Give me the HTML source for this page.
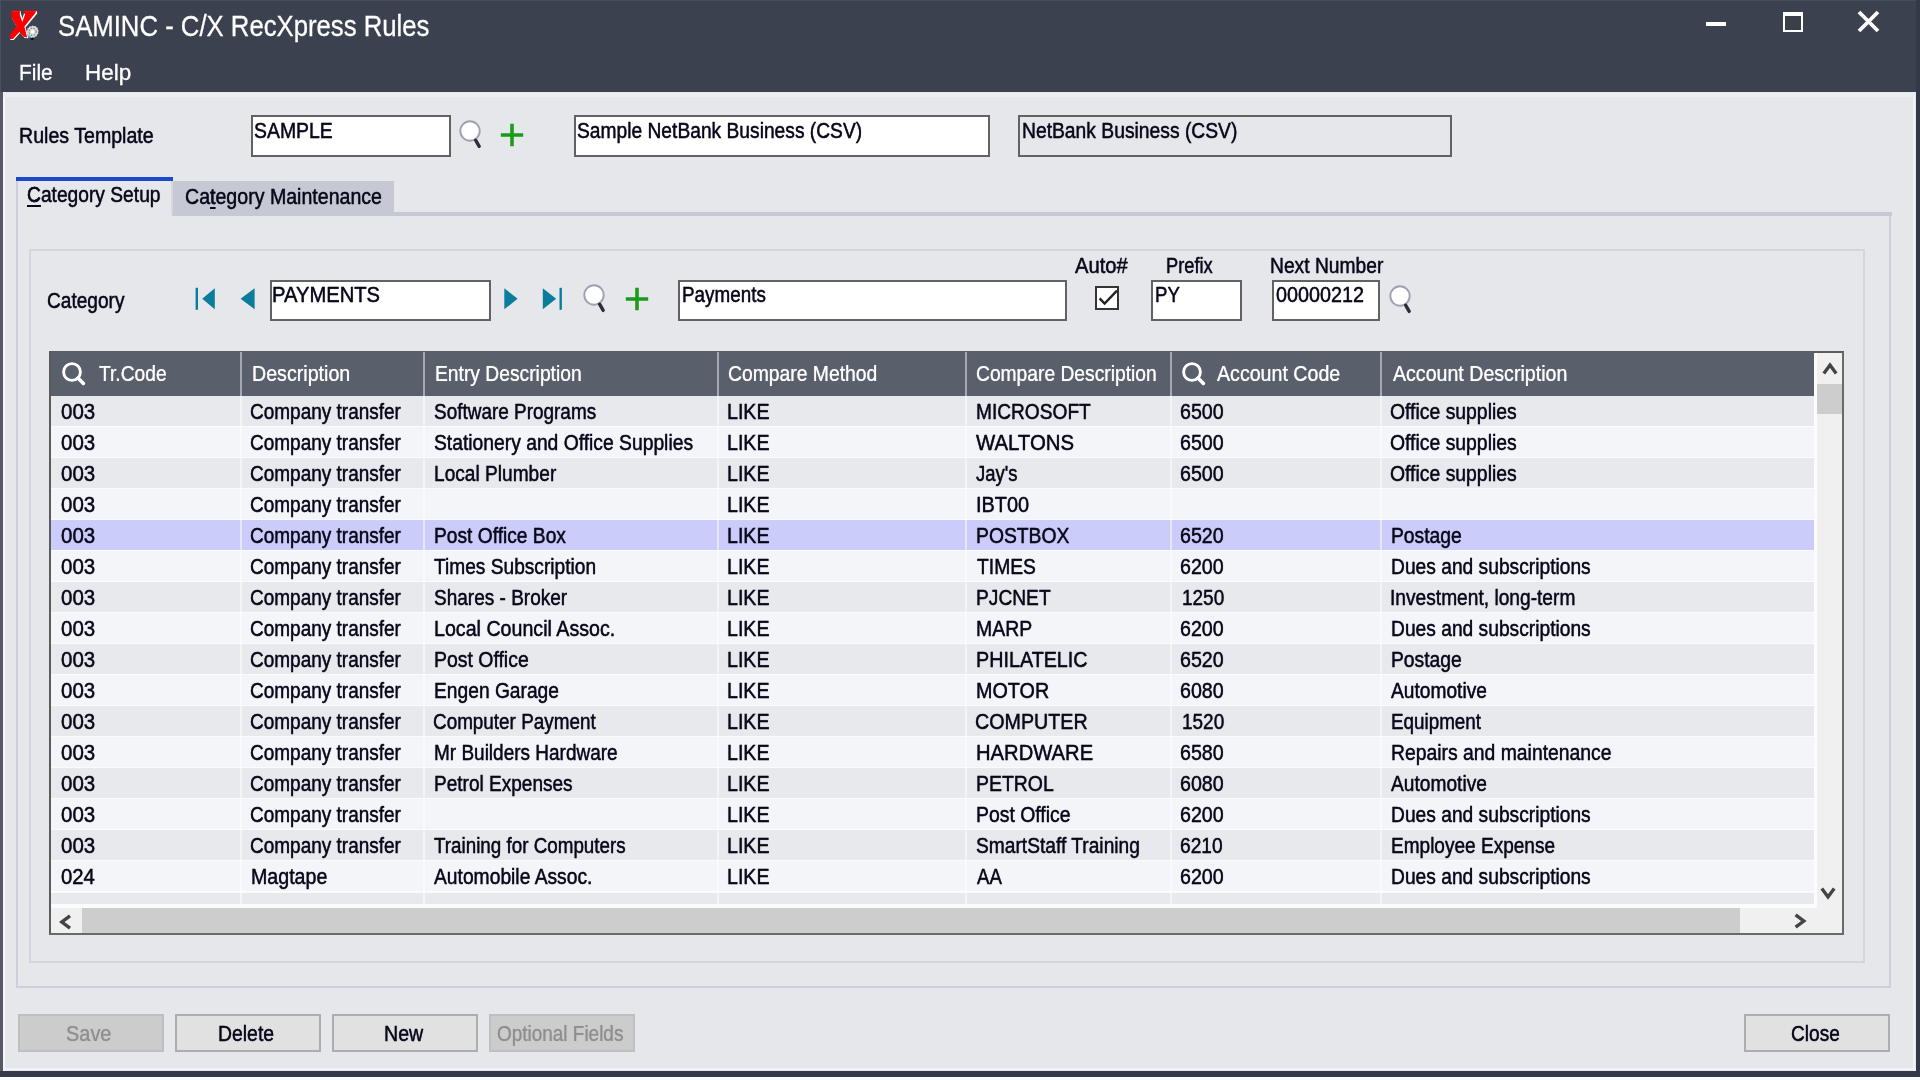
<!DOCTYPE html>
<html><head><meta charset="utf-8"><title>SAMINC - C/X RecXpress Rules</title>
<style>
html,body{margin:0;padding:0}
body{width:1920px;height:1080px;overflow:hidden;position:relative;background:#e6e7eb;font-family:"Liberation Sans",sans-serif;color:#000}
.a{position:absolute}
.t{position:absolute;white-space:nowrap;font-size:22.5px;line-height:26px;transform-origin:0 0;color:#08081a;-webkit-text-stroke:.35px #08081a;text-shadow:0 0 1px rgba(8,8,30,.55)}
.w{color:#fff;-webkit-text-stroke:.2px #fff;text-shadow:0 0 1px rgba(255,255,255,.5)}
.g{color:#8e8e8e;-webkit-text-stroke:.2px #8e8e8e;text-shadow:0 0 1px rgba(142,142,142,.5)}
u{text-decoration:underline;text-underline-offset:3px;text-decoration-thickness:2px}
.inp{position:absolute;background:#fff;border:2px solid #626262;box-sizing:border-box}
.btn{position:absolute;box-sizing:border-box;border:2px solid #adadad;background:#e1e1e1;height:38px;width:146px}
.btn.dis{background:#cccccc;border-color:#bfbfbf}
.row{position:absolute;left:51px;width:1763.3px;height:30.1px}
.ro{background:#e8e9ed}
.re{background:#f4f5f9}
.rs{background:#cbccfa}
.vs{position:absolute;width:2px;top:0;height:100%;background:rgba(255,255,255,.5)}
.hs{position:absolute;top:352px;height:43.6px;width:2px;background:#a6a9b3}
#wrap{position:absolute;left:0;top:0;width:1920px;height:1080px;overflow:hidden}
</style></head><body><div id="wrap">

<div class="a" style="left:0;top:0;width:1920px;height:92px;background:#3c4150"></div>
<div class="a" style="left:0;top:92px;width:2.7px;height:985px;background:#545964"></div>
<div class="a" style="left:0;top:0;width:1.2px;height:92px;background:#4b505d"></div>
<div class="a" style="left:0;top:0;width:1920px;height:1px;background:#474c5a"></div>
<div class="a" style="left:1916px;top:0;width:4px;height:1077px;background:#343949"></div>
<div class="a" style="left:0;top:1070.7px;width:1920px;height:6.4px;background:#343949"></div>
<div class="a" style="left:0;top:1077px;width:1920px;height:3px;background:#fbfbfb"></div>
<div class="a" style="left:2.7px;top:92px;width:2.8px;height:979px;background:#f5f6fa"></div>
<div class="a" style="left:1912.6px;top:92px;width:2.4px;height:979px;background:#f2f3f7"></div>
<div class="a" style="left:3px;top:1067.8px;width:1913px;height:2.4px;background:#f1f2f6"></div>
<div class="a" style="left:3px;top:92.6px;width:1913px;height:4px;background:#eceef2"></div>
<svg class="a" style="left:0;top:0" width="48" height="48" viewBox="0 0 48 48">
<path d="M12.6 11 L20.6 11 L21 14.5 L23 21 L25.2 14.5 L25 11.2 L37 11.2 L37.2 13.4 L25.6 27.4 L28.4 38.2 L24.6 38 L20.2 32.8 L13.8 40 L10.4 40 L10.4 36 L17 27 L12 18 Z" fill="#fff"/>
<path d="M11.5 12 L12.3 10 L13.3 11.4 L14.4 10 L15.5 11.4 L16.6 10 L17.7 11.4 L18.8 10 L19.8 10.6 L20 14.2 L22.3 20.8 L24.8 14.2 L23.6 11.4 L24.8 10 L26 11.4 L27.2 10 L28.4 11.4 L29.6 10 L30.8 11.4 L32 10 L33.2 11.4 L34.4 10 L36 10.4 L35.4 13 L24.4 26.6 L27.2 37.4 L23.8 36.8 L19.4 32 L13 39 L10 39 L10 34.6 L16.4 26 L11.5 17.2 Z" fill="#fb0000"/>
<path d="M20.3 13.4 L20.6 15 L22.3 20 L24.2 15 L24.5 13.6" stroke="#eefafa" stroke-width="1.3" fill="none"/>
<path d="M32.5 25.6 L34 26.2 L35.6 25.9 L36.3 27.3 L37.8 27.9 L37.7 29.5 L38.8 30.7 L38 32.1 L38.4 33.7 L37.1 34.6 L36.8 36.2 L35.2 36.4 L34.2 37.7 L32.7 37.2 L31.2 37.9 L30.1 36.7 L28.5 36.6 L28.1 35 L26.8 34.1 L27.2 32.5 L26.4 31.1 L27.5 29.9 L27.4 28.3 L28.9 27.7 L29.6 26.2 L31.2 26.5 Z" fill="#dcdcdc"/>
<circle cx="32.6" cy="31.8" r="3.6" fill="none" stroke="#8e8e8e" stroke-width="1.3" stroke-dasharray="1.6 1.3"/>
<circle cx="32.6" cy="31.8" r="1.7" fill="#fff"/>
<circle cx="29.3" cy="36.6" r="1.3" fill="#35c0c4"/>
<ellipse cx="32.2" cy="39" rx="1.6" ry="1" fill="#050505"/>
</svg>
<div class="a" style="left:57.5px;top:9px;font-size:30px;line-height:34px;white-space:nowrap;transform-origin:0 0;transform:scaleX(.857);color:#fff;-webkit-text-stroke:.3px #fff">SAMINC - C/X RecXpress Rules</div>
<div class="a" style="left:1706px;top:21.5px;width:20px;height:4px;background:#fff"></div>
<div class="a" style="left:1783px;top:12px;width:19.5px;height:19.5px;box-sizing:border-box;border:2.5px solid #fff;border-top-width:4px;background:#394049"></div>
<svg class="a" style="left:1857px;top:10px" width="23" height="23" viewBox="0 0 23 23"><path d="M2 2 L21 21 M21 2 L2 21" stroke="#fff" stroke-width="3.8" fill="none"/></svg>
<div class="a" style="left:19px;top:59.5px;font-size:22px;line-height:26px;white-space:nowrap;transform-origin:0 0;transform:scaleX(.95);color:#fff;-webkit-text-stroke:.3px #fff">File</div>
<div class="a" style="left:84.5px;top:59.5px;font-size:22px;line-height:26px;white-space:nowrap;transform-origin:0 0;transform:scaleX(1.02);color:#fff;-webkit-text-stroke:.3px #fff">Help</div>
<div class="t " style="left:19.1px;top:123.3px;transform:scaleX(0.871)">Rules Template</div>
<div class="inp" style="left:251px;top:115px;width:199.5px;height:42px"></div>
<div class="t " style="left:254.1px;top:118.3px;transform:scaleX(0.863)">SAMPLE</div>
<svg class="a" style="left:458.0px;top:117.7px" width="26" height="32" viewBox="0 0 26 32"><circle cx="12" cy="13" r="9.7" fill="#fff" stroke="#9da1b2" stroke-width="1.9"/><path d="M17.6 22.2 L21.2 28.4" stroke="#2b2f3d" stroke-width="3.4" stroke-linecap="round"/></svg>
<svg class="a" style="left:500.4px;top:123.0px" width="24" height="24" viewBox="0 0 24 24"><path d="M12 .8 V23.2 M.8 12 H23.2" stroke="#1b9b1b" stroke-width="3.6" fill="none"/></svg>
<div class="inp" style="left:574px;top:115px;width:415.5px;height:42px"></div>
<div class="t " style="left:577.4px;top:118.3px;transform:scaleX(0.854)">Sample NetBank Business (CSV)</div>
<div class="inp" style="left:1018px;top:115px;width:433.5px;height:42px;background:#e6e7eb"></div>
<div class="t " style="left:1021.8px;top:118.3px;transform:scaleX(0.857)">NetBank Business (CSV)</div>
<div class="a" style="left:172px;top:181px;width:222px;height:35px;background:#c6c9d3"></div>
<div class="a" style="left:172px;top:212px;width:1720px;height:4px;background:#c6c9d3"></div>
<div class="a" style="left:16px;top:177px;width:157px;height:4px;background:#1c47cf"></div>
<div class="a" style="left:16px;top:181px;width:2px;height:806px;background:#cdd0da"></div>
<div class="a" style="left:171px;top:181px;width:2px;height:33px;background:#d6d8e0"></div>
<div class="a" style="left:1889px;top:216px;width:2px;height:771px;background:#cdd0da"></div>
<div class="a" style="left:16px;top:986px;width:1875px;height:2px;background:#cdd0da"></div>
<div class="t " style="left:26.8px;top:182.3px;transform:scaleX(0.854)"><u>C</u>ategory Setup</div>
<div class="t " style="left:185.1px;top:184.3px;transform:scaleX(0.870)">Ca<u>t</u>egory Maintenance</div>
<div class="a" style="left:29px;top:249px;width:1836px;height:714px;box-sizing:border-box;border:2px solid #d3d6de"></div>
<div class="t " style="left:46.9px;top:288.3px;transform:scaleX(0.848)">Category</div>
<svg class="a" style="left:194.4px;top:287.3px" width="22" height="24" viewBox="0 0 22 24"><path d="M2.8 .8 V22.8" stroke="#0b7d9c" stroke-width="2.4"/><path d="M20.8 1.3 L8.2 11.8 L20.8 22.3 Z" fill="#0b7d9c"/></svg>
<svg class="a" style="left:239.6px;top:287.3px" width="16" height="24" viewBox="0 0 16 24"><path d="M14.6 1.3 L.6 11.8 L14.6 22.3 Z" fill="#0b7d9c"/></svg>
<div class="inp" style="left:269.5px;top:279.5px;width:221px;height:41.5px"></div>
<div class="t " style="left:272.4px;top:282.3px;transform:scaleX(0.897)">PAYMENTS</div>
<svg class="a" style="left:503.4px;top:287.3px" width="16" height="24" viewBox="0 0 16 24"><path d="M1.3 1.3 L14.6 11.8 L1.3 22.3 Z" fill="#0b7d9c"/></svg>
<svg class="a" style="left:541.3px;top:287.3px" width="22" height="24" viewBox="0 0 22 24"><path d="M19.7 .8 V22.8" stroke="#0b7d9c" stroke-width="2.4"/><path d="M1.8 1.3 L15.2 11.8 L1.8 22.3 Z" fill="#0b7d9c"/></svg>
<svg class="a" style="left:582.3px;top:282.1px" width="26" height="32" viewBox="0 0 26 32"><circle cx="12" cy="13" r="9.7" fill="#fff" stroke="#9da1b2" stroke-width="1.9"/><path d="M17.6 22.2 L21.2 28.4" stroke="#2b2f3d" stroke-width="3.4" stroke-linecap="round"/></svg>
<svg class="a" style="left:625.0px;top:287.0px" width="24" height="24" viewBox="0 0 24 24"><path d="M12 .8 V23.2 M.8 12 H23.2" stroke="#1b9b1b" stroke-width="3.6" fill="none"/></svg>
<div class="inp" style="left:678px;top:279.5px;width:388.5px;height:41.5px"></div>
<div class="t " style="left:681.9px;top:282.3px;transform:scaleX(0.838)">Payments</div>
<div class="t " style="left:1075.4px;top:253.3px;transform:scaleX(0.897)">Auto#</div>
<div class="a" style="left:1094.6px;top:286.2px;width:24.4px;height:24.2px;box-sizing:border-box;border:2.4px solid #343434;background:#fff"></div>
<svg class="a" style="left:1094.6px;top:286.2px" width="25" height="25" viewBox="0 0 25 25"><path d="M4.6 12.4 L9.6 17.6 L22 4.6" stroke="#222" stroke-width="2.4" fill="none"/></svg>
<div class="t " style="left:1166.1px;top:253.3px;transform:scaleX(0.812)">Prefix</div>
<div class="inp" style="left:1151px;top:279.5px;width:90.5px;height:41.5px"></div>
<div class="t " style="left:1155.2px;top:282.3px;transform:scaleX(0.828)">PY</div>
<div class="t " style="left:1269.9px;top:253.3px;transform:scaleX(0.855)">Next Number</div>
<div class="inp" style="left:1271.5px;top:279.5px;width:108.5px;height:41.5px"></div>
<div class="t " style="left:1275.8px;top:282.3px;transform:scaleX(0.879)">00000212</div>
<svg class="a" style="left:1387.6px;top:282.9px" width="26" height="32" viewBox="0 0 26 32"><circle cx="12" cy="13" r="9.7" fill="#fff" stroke="#9da1b2" stroke-width="1.9"/><path d="M17.6 22.2 L21.2 28.4" stroke="#2b2f3d" stroke-width="3.4" stroke-linecap="round"/></svg>
<div class="a" style="left:49px;top:350.6px;width:1795px;height:584.6px;box-sizing:border-box;border:2px solid #5c5c5c;border-right-color:#6a6a6a;border-bottom-color:#6a6a6a;background:#fbfbfd"></div>
<div class="a" style="left:51px;top:352px;width:1763.3px;height:43.6px;background:#5a5f6c"></div>
<div class="hs" style="left:240px"></div>
<div class="hs" style="left:423px"></div>
<div class="hs" style="left:717px"></div>
<div class="hs" style="left:965px"></div>
<div class="hs" style="left:1170px"></div>
<div class="hs" style="left:1380px"></div>
<svg class="a" style="left:61.4px;top:361.2px" width="28" height="28" viewBox="0 0 28 28"><circle cx="11" cy="11" r="8.4" fill="none" stroke="#fff" stroke-width="2.9"/><path d="M17 17 L22.4 22.4" stroke="#fff" stroke-width="3.6" stroke-linecap="round"/></svg>
<svg class="a" style="left:1181.4px;top:361.2px" width="28" height="28" viewBox="0 0 28 28"><circle cx="11" cy="11" r="8.4" fill="none" stroke="#fff" stroke-width="2.9"/><path d="M17 17 L22.4 22.4" stroke="#fff" stroke-width="3.6" stroke-linecap="round"/></svg>
<div class="t w" style="left:98.8px;top:361.3px;transform:scaleX(0.854)">Tr.Code</div>
<div class="t w" style="left:252.4px;top:361.3px;transform:scaleX(0.873)">Description</div>
<div class="t w" style="left:435.1px;top:361.3px;transform:scaleX(0.856)">Entry Description</div>
<div class="t w" style="left:728.1px;top:361.3px;transform:scaleX(0.859)">Compare Method</div>
<div class="t w" style="left:976.4px;top:361.3px;transform:scaleX(0.855)">Compare Description</div>
<div class="t w" style="left:1217.0px;top:361.3px;transform:scaleX(0.872)">Account Code</div>
<div class="t w" style="left:1393.3px;top:361.3px;transform:scaleX(0.871)">Account Description</div>
<div class="row ro" style="top:396px"><div class="vs" style="left:189px"></div><div class="vs" style="left:372px"></div><div class="vs" style="left:666px"></div><div class="vs" style="left:914px"></div><div class="vs" style="left:1119px"></div><div class="vs" style="left:1329px"></div></div>
<div class="t " style="left:60.6px;top:399.3px;transform:scaleX(0.911)">003</div>
<div class="t " style="left:250.0px;top:399.3px;transform:scaleX(0.844)">Company transfer</div>
<div class="t " style="left:433.6px;top:399.3px;transform:scaleX(0.842)">Software Programs</div>
<div class="t " style="left:727.4px;top:399.3px;transform:scaleX(0.872)">LIKE</div>
<div class="t " style="left:976.2px;top:399.3px;transform:scaleX(0.850)">MICROSOFT</div>
<div class="t " style="left:1180.4px;top:399.3px;transform:scaleX(0.873)">6500</div>
<div class="t " style="left:1389.5px;top:399.3px;transform:scaleX(0.861)">Office supplies</div>
<div class="row re" style="top:427px"><div class="vs" style="left:189px"></div><div class="vs" style="left:372px"></div><div class="vs" style="left:666px"></div><div class="vs" style="left:914px"></div><div class="vs" style="left:1119px"></div><div class="vs" style="left:1329px"></div></div>
<div class="t " style="left:60.6px;top:430.3px;transform:scaleX(0.911)">003</div>
<div class="t " style="left:250.0px;top:430.3px;transform:scaleX(0.844)">Company transfer</div>
<div class="t " style="left:433.5px;top:430.3px;transform:scaleX(0.857)">Stationery and Office Supplies</div>
<div class="t " style="left:727.4px;top:430.3px;transform:scaleX(0.872)">LIKE</div>
<div class="t " style="left:976.4px;top:430.3px;transform:scaleX(0.905)">WALTONS</div>
<div class="t " style="left:1180.4px;top:430.3px;transform:scaleX(0.873)">6500</div>
<div class="t " style="left:1389.5px;top:430.3px;transform:scaleX(0.861)">Office supplies</div>
<div class="row ro" style="top:458px"><div class="vs" style="left:189px"></div><div class="vs" style="left:372px"></div><div class="vs" style="left:666px"></div><div class="vs" style="left:914px"></div><div class="vs" style="left:1119px"></div><div class="vs" style="left:1329px"></div></div>
<div class="t " style="left:60.6px;top:461.3px;transform:scaleX(0.911)">003</div>
<div class="t " style="left:250.0px;top:461.3px;transform:scaleX(0.844)">Company transfer</div>
<div class="t " style="left:433.5px;top:461.3px;transform:scaleX(0.850)">Local Plumber</div>
<div class="t " style="left:727.4px;top:461.3px;transform:scaleX(0.872)">LIKE</div>
<div class="t " style="left:976.4px;top:461.3px;transform:scaleX(0.820)">Jay's</div>
<div class="t " style="left:1180.4px;top:461.3px;transform:scaleX(0.873)">6500</div>
<div class="t " style="left:1389.5px;top:461.3px;transform:scaleX(0.861)">Office supplies</div>
<div class="row re" style="top:489px"><div class="vs" style="left:189px"></div><div class="vs" style="left:372px"></div><div class="vs" style="left:666px"></div><div class="vs" style="left:914px"></div><div class="vs" style="left:1119px"></div><div class="vs" style="left:1329px"></div></div>
<div class="t " style="left:60.6px;top:492.3px;transform:scaleX(0.911)">003</div>
<div class="t " style="left:250.0px;top:492.3px;transform:scaleX(0.844)">Company transfer</div>
<div class="t " style="left:727.4px;top:492.3px;transform:scaleX(0.872)">LIKE</div>
<div class="t " style="left:975.8px;top:492.3px;transform:scaleX(0.886)">IBT00</div>
<div class="row rs" style="top:520px"><div class="vs" style="left:189px"></div><div class="vs" style="left:372px"></div><div class="vs" style="left:666px"></div><div class="vs" style="left:914px"></div><div class="vs" style="left:1119px"></div><div class="vs" style="left:1329px"></div></div>
<div class="t " style="left:60.6px;top:523.3px;transform:scaleX(0.911)">003</div>
<div class="t " style="left:250.0px;top:523.3px;transform:scaleX(0.844)">Company transfer</div>
<div class="t " style="left:433.5px;top:523.3px;transform:scaleX(0.853)">Post Office Box</div>
<div class="t " style="left:727.4px;top:523.3px;transform:scaleX(0.872)">LIKE</div>
<div class="t " style="left:976.2px;top:523.3px;transform:scaleX(0.859)">POSTBOX</div>
<div class="t " style="left:1180.4px;top:523.3px;transform:scaleX(0.873)">6520</div>
<div class="t " style="left:1390.7px;top:523.3px;transform:scaleX(0.857)">Postage</div>
<div class="row re" style="top:551px"><div class="vs" style="left:189px"></div><div class="vs" style="left:372px"></div><div class="vs" style="left:666px"></div><div class="vs" style="left:914px"></div><div class="vs" style="left:1119px"></div><div class="vs" style="left:1329px"></div></div>
<div class="t " style="left:60.6px;top:554.3px;transform:scaleX(0.911)">003</div>
<div class="t " style="left:250.0px;top:554.3px;transform:scaleX(0.844)">Company transfer</div>
<div class="t " style="left:434.4px;top:554.3px;transform:scaleX(0.851)">Times Subscription</div>
<div class="t " style="left:727.4px;top:554.3px;transform:scaleX(0.872)">LIKE</div>
<div class="t " style="left:977.1px;top:554.3px;transform:scaleX(0.857)">TIMES</div>
<div class="t " style="left:1180.4px;top:554.3px;transform:scaleX(0.873)">6200</div>
<div class="t " style="left:1390.7px;top:554.3px;transform:scaleX(0.854)">Dues and subscriptions</div>
<div class="row ro" style="top:582px"><div class="vs" style="left:189px"></div><div class="vs" style="left:372px"></div><div class="vs" style="left:666px"></div><div class="vs" style="left:914px"></div><div class="vs" style="left:1119px"></div><div class="vs" style="left:1329px"></div></div>
<div class="t " style="left:60.6px;top:585.3px;transform:scaleX(0.911)">003</div>
<div class="t " style="left:250.0px;top:585.3px;transform:scaleX(0.844)">Company transfer</div>
<div class="t " style="left:433.6px;top:585.3px;transform:scaleX(0.845)">Shares - Broker</div>
<div class="t " style="left:727.4px;top:585.3px;transform:scaleX(0.872)">LIKE</div>
<div class="t " style="left:976.2px;top:585.3px;transform:scaleX(0.853)">PJCNET</div>
<div class="t " style="left:1182.0px;top:585.3px;transform:scaleX(0.843)">1250</div>
<div class="t " style="left:1389.9px;top:585.3px;transform:scaleX(0.852)">Investment, long-term</div>
<div class="row re" style="top:613px"><div class="vs" style="left:189px"></div><div class="vs" style="left:372px"></div><div class="vs" style="left:666px"></div><div class="vs" style="left:914px"></div><div class="vs" style="left:1119px"></div><div class="vs" style="left:1329px"></div></div>
<div class="t " style="left:60.6px;top:616.3px;transform:scaleX(0.911)">003</div>
<div class="t " style="left:250.0px;top:616.3px;transform:scaleX(0.844)">Company transfer</div>
<div class="t " style="left:433.5px;top:616.3px;transform:scaleX(0.873)">Local Council Assoc.</div>
<div class="t " style="left:727.4px;top:616.3px;transform:scaleX(0.872)">LIKE</div>
<div class="t " style="left:976.2px;top:616.3px;transform:scaleX(0.863)">MARP</div>
<div class="t " style="left:1180.4px;top:616.3px;transform:scaleX(0.873)">6200</div>
<div class="t " style="left:1390.7px;top:616.3px;transform:scaleX(0.854)">Dues and subscriptions</div>
<div class="row ro" style="top:644px"><div class="vs" style="left:189px"></div><div class="vs" style="left:372px"></div><div class="vs" style="left:666px"></div><div class="vs" style="left:914px"></div><div class="vs" style="left:1119px"></div><div class="vs" style="left:1329px"></div></div>
<div class="t " style="left:60.6px;top:647.3px;transform:scaleX(0.911)">003</div>
<div class="t " style="left:250.0px;top:647.3px;transform:scaleX(0.844)">Company transfer</div>
<div class="t " style="left:433.5px;top:647.3px;transform:scaleX(0.864)">Post Office</div>
<div class="t " style="left:727.4px;top:647.3px;transform:scaleX(0.872)">LIKE</div>
<div class="t " style="left:976.2px;top:647.3px;transform:scaleX(0.878)">PHILATELIC</div>
<div class="t " style="left:1180.4px;top:647.3px;transform:scaleX(0.873)">6520</div>
<div class="t " style="left:1390.7px;top:647.3px;transform:scaleX(0.857)">Postage</div>
<div class="row re" style="top:675px"><div class="vs" style="left:189px"></div><div class="vs" style="left:372px"></div><div class="vs" style="left:666px"></div><div class="vs" style="left:914px"></div><div class="vs" style="left:1119px"></div><div class="vs" style="left:1329px"></div></div>
<div class="t " style="left:60.6px;top:678.3px;transform:scaleX(0.911)">003</div>
<div class="t " style="left:250.0px;top:678.3px;transform:scaleX(0.844)">Company transfer</div>
<div class="t " style="left:433.5px;top:678.3px;transform:scaleX(0.854)">Engen Garage</div>
<div class="t " style="left:727.4px;top:678.3px;transform:scaleX(0.872)">LIKE</div>
<div class="t " style="left:976.2px;top:678.3px;transform:scaleX(0.878)">MOTOR</div>
<div class="t " style="left:1180.4px;top:678.3px;transform:scaleX(0.873)">6080</div>
<div class="t " style="left:1391.1px;top:678.3px;transform:scaleX(0.852)">Automotive</div>
<div class="row ro" style="top:706px"><div class="vs" style="left:189px"></div><div class="vs" style="left:372px"></div><div class="vs" style="left:666px"></div><div class="vs" style="left:914px"></div><div class="vs" style="left:1119px"></div><div class="vs" style="left:1329px"></div></div>
<div class="t " style="left:60.6px;top:709.3px;transform:scaleX(0.911)">003</div>
<div class="t " style="left:250.0px;top:709.3px;transform:scaleX(0.844)">Company transfer</div>
<div class="t " style="left:432.5px;top:709.3px;transform:scaleX(0.839)">Computer Payment</div>
<div class="t " style="left:727.4px;top:709.3px;transform:scaleX(0.872)">LIKE</div>
<div class="t " style="left:974.8px;top:709.3px;transform:scaleX(0.875)">COMPUTER</div>
<div class="t " style="left:1182.0px;top:709.3px;transform:scaleX(0.843)">1520</div>
<div class="t " style="left:1390.8px;top:709.3px;transform:scaleX(0.837)">Equipment</div>
<div class="row re" style="top:737px"><div class="vs" style="left:189px"></div><div class="vs" style="left:372px"></div><div class="vs" style="left:666px"></div><div class="vs" style="left:914px"></div><div class="vs" style="left:1119px"></div><div class="vs" style="left:1329px"></div></div>
<div class="t " style="left:60.6px;top:740.3px;transform:scaleX(0.911)">003</div>
<div class="t " style="left:250.0px;top:740.3px;transform:scaleX(0.844)">Company transfer</div>
<div class="t " style="left:433.6px;top:740.3px;transform:scaleX(0.844)">Mr Builders Hardware</div>
<div class="t " style="left:727.4px;top:740.3px;transform:scaleX(0.872)">LIKE</div>
<div class="t " style="left:976.2px;top:740.3px;transform:scaleX(0.898)">HARDWARE</div>
<div class="t " style="left:1180.4px;top:740.3px;transform:scaleX(0.873)">6580</div>
<div class="t " style="left:1390.7px;top:740.3px;transform:scaleX(0.860)">Repairs and maintenance</div>
<div class="row ro" style="top:768px"><div class="vs" style="left:189px"></div><div class="vs" style="left:372px"></div><div class="vs" style="left:666px"></div><div class="vs" style="left:914px"></div><div class="vs" style="left:1119px"></div><div class="vs" style="left:1329px"></div></div>
<div class="t " style="left:60.6px;top:771.3px;transform:scaleX(0.911)">003</div>
<div class="t " style="left:250.0px;top:771.3px;transform:scaleX(0.844)">Company transfer</div>
<div class="t " style="left:433.6px;top:771.3px;transform:scaleX(0.846)">Petrol Expenses</div>
<div class="t " style="left:727.4px;top:771.3px;transform:scaleX(0.872)">LIKE</div>
<div class="t " style="left:976.2px;top:771.3px;transform:scaleX(0.864)">PETROL</div>
<div class="t " style="left:1180.4px;top:771.3px;transform:scaleX(0.873)">6080</div>
<div class="t " style="left:1391.1px;top:771.3px;transform:scaleX(0.852)">Automotive</div>
<div class="row re" style="top:799px"><div class="vs" style="left:189px"></div><div class="vs" style="left:372px"></div><div class="vs" style="left:666px"></div><div class="vs" style="left:914px"></div><div class="vs" style="left:1119px"></div><div class="vs" style="left:1329px"></div></div>
<div class="t " style="left:60.6px;top:802.3px;transform:scaleX(0.911)">003</div>
<div class="t " style="left:250.0px;top:802.3px;transform:scaleX(0.844)">Company transfer</div>
<div class="t " style="left:727.4px;top:802.3px;transform:scaleX(0.872)">LIKE</div>
<div class="t " style="left:976.2px;top:802.3px;transform:scaleX(0.862)">Post Office</div>
<div class="t " style="left:1180.4px;top:802.3px;transform:scaleX(0.873)">6200</div>
<div class="t " style="left:1390.7px;top:802.3px;transform:scaleX(0.854)">Dues and subscriptions</div>
<div class="row ro" style="top:830px"><div class="vs" style="left:189px"></div><div class="vs" style="left:372px"></div><div class="vs" style="left:666px"></div><div class="vs" style="left:914px"></div><div class="vs" style="left:1119px"></div><div class="vs" style="left:1329px"></div></div>
<div class="t " style="left:60.6px;top:833.3px;transform:scaleX(0.911)">003</div>
<div class="t " style="left:250.0px;top:833.3px;transform:scaleX(0.844)">Company transfer</div>
<div class="t " style="left:434.4px;top:833.3px;transform:scaleX(0.836)">Training for Computers</div>
<div class="t " style="left:727.4px;top:833.3px;transform:scaleX(0.872)">LIKE</div>
<div class="t " style="left:976.2px;top:833.3px;transform:scaleX(0.853)">SmartStaff Training</div>
<div class="t " style="left:1180.4px;top:833.3px;transform:scaleX(0.851)">6210</div>
<div class="t " style="left:1390.8px;top:833.3px;transform:scaleX(0.846)">Employee Expense</div>
<div class="row re" style="top:861px"><div class="vs" style="left:189px"></div><div class="vs" style="left:372px"></div><div class="vs" style="left:666px"></div><div class="vs" style="left:914px"></div><div class="vs" style="left:1119px"></div><div class="vs" style="left:1329px"></div></div>
<div class="t " style="left:60.6px;top:864.3px;transform:scaleX(0.903)">024</div>
<div class="t " style="left:251.0px;top:864.3px;transform:scaleX(0.872)">Magtape</div>
<div class="t " style="left:434.4px;top:864.3px;transform:scaleX(0.856)">Automobile Assoc.</div>
<div class="t " style="left:727.4px;top:864.3px;transform:scaleX(0.872)">LIKE</div>
<div class="t " style="left:977.1px;top:864.3px;transform:scaleX(0.827)">AA</div>
<div class="t " style="left:1180.4px;top:864.3px;transform:scaleX(0.873)">6200</div>
<div class="t " style="left:1390.7px;top:864.3px;transform:scaleX(0.854)">Dues and subscriptions</div>
<div class="row ro" style="top:892.7px;height:11.2px"><div class="vs" style="left:189px"></div><div class="vs" style="left:372px"></div><div class="vs" style="left:666px"></div><div class="vs" style="left:914px"></div><div class="vs" style="left:1119px"></div><div class="vs" style="left:1329px"></div></div>
<div class="a" style="left:1816.6px;top:352.6px;width:25.4px;height:556px;background:#f0f0f0"></div>
<div class="a" style="left:1816.6px;top:383.5px;width:25.4px;height:30.5px;background:#cdcdcd"></div>
<svg class="a" style="left:1821.3px;top:360px" width="18" height="16" viewBox="0 0 18 16"><path d="M2.8 13.4 L9 5 L15.2 13.4" stroke="#444" stroke-width="3.4" fill="none"/></svg>
<svg class="a" style="left:1818.5px;top:885.5px" width="18" height="16" viewBox="0 0 18 16"><path d="M2.8 2.6 L9 11 L15.2 2.6" stroke="#444" stroke-width="3.4" fill="none"/></svg>
<div class="a" style="left:51px;top:908px;width:1791px;height:25px;background:#f0f0f0"></div>
<div class="a" style="left:82px;top:908px;width:1657.7px;height:25px;background:#cdcdcd"></div>
<svg class="a" style="left:57px;top:912.5px" width="16" height="18" viewBox="0 0 16 18"><path d="M13 2.8 L4.8 9 L13 15.2" stroke="#444" stroke-width="3.4" fill="none"/></svg>
<svg class="a" style="left:1792px;top:912px" width="16" height="18" viewBox="0 0 16 18"><path d="M3.6 2.8 L11.8 9 L3.6 15.2" stroke="#444" stroke-width="3.4" fill="none"/></svg>
<div class="btn dis" style="left:18px;top:1014px"></div>
<div class="t g" style="left:65.8px;top:1021.3px;transform:scaleX(0.886)">Save</div>
<div class="btn " style="left:175px;top:1014px"></div>
<div class="t " style="left:218.1px;top:1021.3px;transform:scaleX(0.862)">Delete</div>
<div class="btn " style="left:332px;top:1014px"></div>
<div class="t " style="left:384.1px;top:1021.3px;transform:scaleX(0.870)">New</div>
<div class="btn dis" style="left:489px;top:1014px"></div>
<div class="t g" style="left:496.5px;top:1021.3px;transform:scaleX(0.842)">Optional Fields</div>
<div class="btn " style="left:1744px;top:1014px"></div>
<div class="t " style="left:1791.2px;top:1021.3px;transform:scaleX(0.848)">Close</div>
</div></body></html>
